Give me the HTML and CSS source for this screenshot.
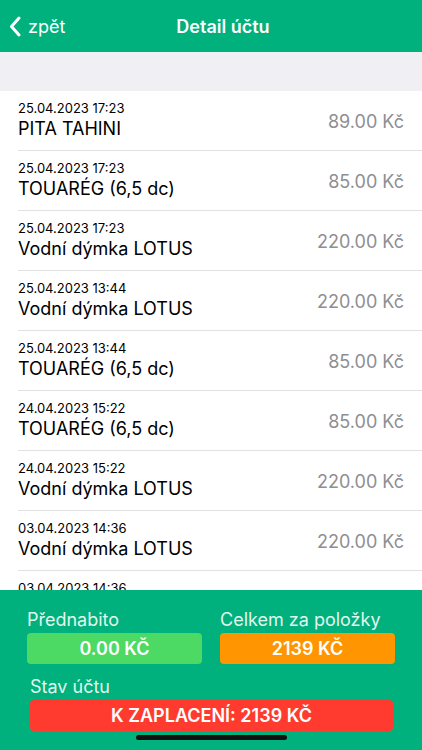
FILE: index.html
```html
<!DOCTYPE html>
<html lang="cs">
<head>
  <meta charset="UTF-8">
  <meta name="viewport" content="width=device-width, initial-scale=1.0">
  <title>Detail účtu</title>
  <link rel="stylesheet" href="styles.css">
</head>
<body>
  <div class="screen">
    <header class="nav-bar">
      <a class="back" href="#">
        <svg class="back-icon" width="12" height="21" viewBox="0 0 12 21">
          <path d="M10 2 L2.5 10.5 L10 19" fill="none" stroke="#fff" stroke-width="3" stroke-linecap="round" stroke-linejoin="round"/>
        </svg>
        <span>zpět</span>
      </a>
      <h1 class="title">Detail účtu</h1>
    </header>

    <div class="section-gap"></div>

    <ul class="item-list">
      <li class="item">
        <div class="item-info">
          <span class="item-date">25.04.2023 17:23</span>
          <span class="item-name">PITA TAHINI</span>
        </div>
        <span class="item-price">89.00 Kč</span>
      </li>
      <li class="item">
        <div class="item-info">
          <span class="item-date">25.04.2023 17:23</span>
          <span class="item-name">TOUARÉG (6,5 dc)</span>
        </div>
        <span class="item-price">85.00 Kč</span>
      </li>
      <li class="item">
        <div class="item-info">
          <span class="item-date">25.04.2023 17:23</span>
          <span class="item-name">Vodní dýmka LOTUS</span>
        </div>
        <span class="item-price">220.00 Kč</span>
      </li>
      <li class="item">
        <div class="item-info">
          <span class="item-date">25.04.2023 13:44</span>
          <span class="item-name">Vodní dýmka LOTUS</span>
        </div>
        <span class="item-price">220.00 Kč</span>
      </li>
      <li class="item">
        <div class="item-info">
          <span class="item-date">25.04.2023 13:44</span>
          <span class="item-name">TOUARÉG (6,5 dc)</span>
        </div>
        <span class="item-price">85.00 Kč</span>
      </li>
      <li class="item">
        <div class="item-info">
          <span class="item-date">24.04.2023 15:22</span>
          <span class="item-name">TOUARÉG (6,5 dc)</span>
        </div>
        <span class="item-price">85.00 Kč</span>
      </li>
      <li class="item">
        <div class="item-info">
          <span class="item-date">24.04.2023 15:22</span>
          <span class="item-name">Vodní dýmka LOTUS</span>
        </div>
        <span class="item-price">220.00 Kč</span>
      </li>
      <li class="item">
        <div class="item-info">
          <span class="item-date">03.04.2023 14:36</span>
          <span class="item-name">Vodní dýmka LOTUS</span>
        </div>
        <span class="item-price">220.00 Kč</span>
      </li>
      <li class="item">
        <div class="item-info">
          <span class="item-date">03.04.2023 14:36</span>
          <span class="item-name">Vodní dýmka LOTUS</span>
        </div>
        <span class="item-price">220.00 Kč</span>
      </li>
    </ul>

    <footer class="summary">
      <div class="summary-row">
        <div class="summary-cell">
          <span class="summary-label">Přednabito</span>
          <div class="summary-box box-green">0.00 KČ</div>
        </div>
        <div class="summary-cell">
          <span class="summary-label">Celkem za položky</span>
          <div class="summary-box box-orange">2139 KČ</div>
        </div>
      </div>
      <div class="summary-state">
        <span class="summary-label">Stav účtu</span>
        <div class="summary-box box-red">K ZAPLACENÍ: 2139 KČ</div>
      </div>
      <div class="home-indicator"></div>
    </footer>
  </div>
</body>
</html>
```

FILE: styles.css
```css
* {
  box-sizing: border-box;
}
body {
  margin: 0;
  background: #fff;
  font-family: Inter, "Liberation Sans", sans-serif;
  color: #000;
}
ul {
  margin: 0;
  padding: 0;
  list-style: none;
}
.screen {
  width: 422px;
  height: 750px;
  display: flex;
  flex-direction: column;
  overflow: hidden;
}

/* nav bar */
.nav-bar {
  height: 52px;
  flex-shrink: 0;
  background: #00b07d;
  display: grid;
  grid-template-columns: 1fr auto 1fr;
  align-items: center;
  padding: 0 9px;
}
.back {
  display: flex;
  align-items: center;
  gap: 7px;
  color: #fff;
  text-decoration: none;
  font-size: 18px;
  padding-top: 1px;
}
.back-icon {
  display: block;
}
.title {
  grid-column: 2;
  margin: 0;
  padding-left: 24px;
  color: #fff;
  font-size: 18px;
  font-weight: 600;
  padding-top: 1px;
}

.section-gap {
  height: 39px;
  flex-shrink: 0;
  background: #efeff4;
}

/* items */
.item-list {
  flex: 1;
  overflow: hidden;
}
.item {
  height: 60px;
  margin-left: 18px;
  padding: 9px 18px 0 0;
  border-bottom: 1px solid #e2e2e6;
  display: flex;
  justify-content: space-between;
  align-items: center;
}
.item-info {
  display: flex;
  flex-direction: column;
  align-self: flex-start;
}
.item-date {
  font-size: 13px;
  line-height: 16px;
}
.item-name {
  font-size: 18px;
  line-height: 22px;
  margin-top: 2px;
}
.item-price {
  font-size: 18px;
  color: #8e8e93;
  margin-top: -7px;
}

/* summary */
.summary {
  height: 160px;
  flex-shrink: 0;
  background: #00b07d;
  padding: 20px 27px 0;
}
.summary-row {
  display: flex;
  gap: 18px;
}
.summary-cell {
  flex: 1;
}
.summary-label {
  display: block;
  color: #e2f6ec;
  font-size: 18px;
  line-height: 20px;
  margin-bottom: 3px;
}
.summary-box {
  height: 31px;
  border-radius: 4px;
  color: #fff;
  font-size: 18px;
  font-weight: 600;
  display: flex;
  align-items: center;
  justify-content: center;
}
.box-green {
  background: #4cd964;
}
.box-orange {
  background: #ff9500;
}
.box-red {
  background: #ff3b30;
}
.summary-state {
  margin: 13px 2px 0 3px;
}
.home-indicator {
  width: 151px;
  height: 5px;
  margin: 4px auto 0;
  border-radius: 3px;
  background: #111;
}
```
